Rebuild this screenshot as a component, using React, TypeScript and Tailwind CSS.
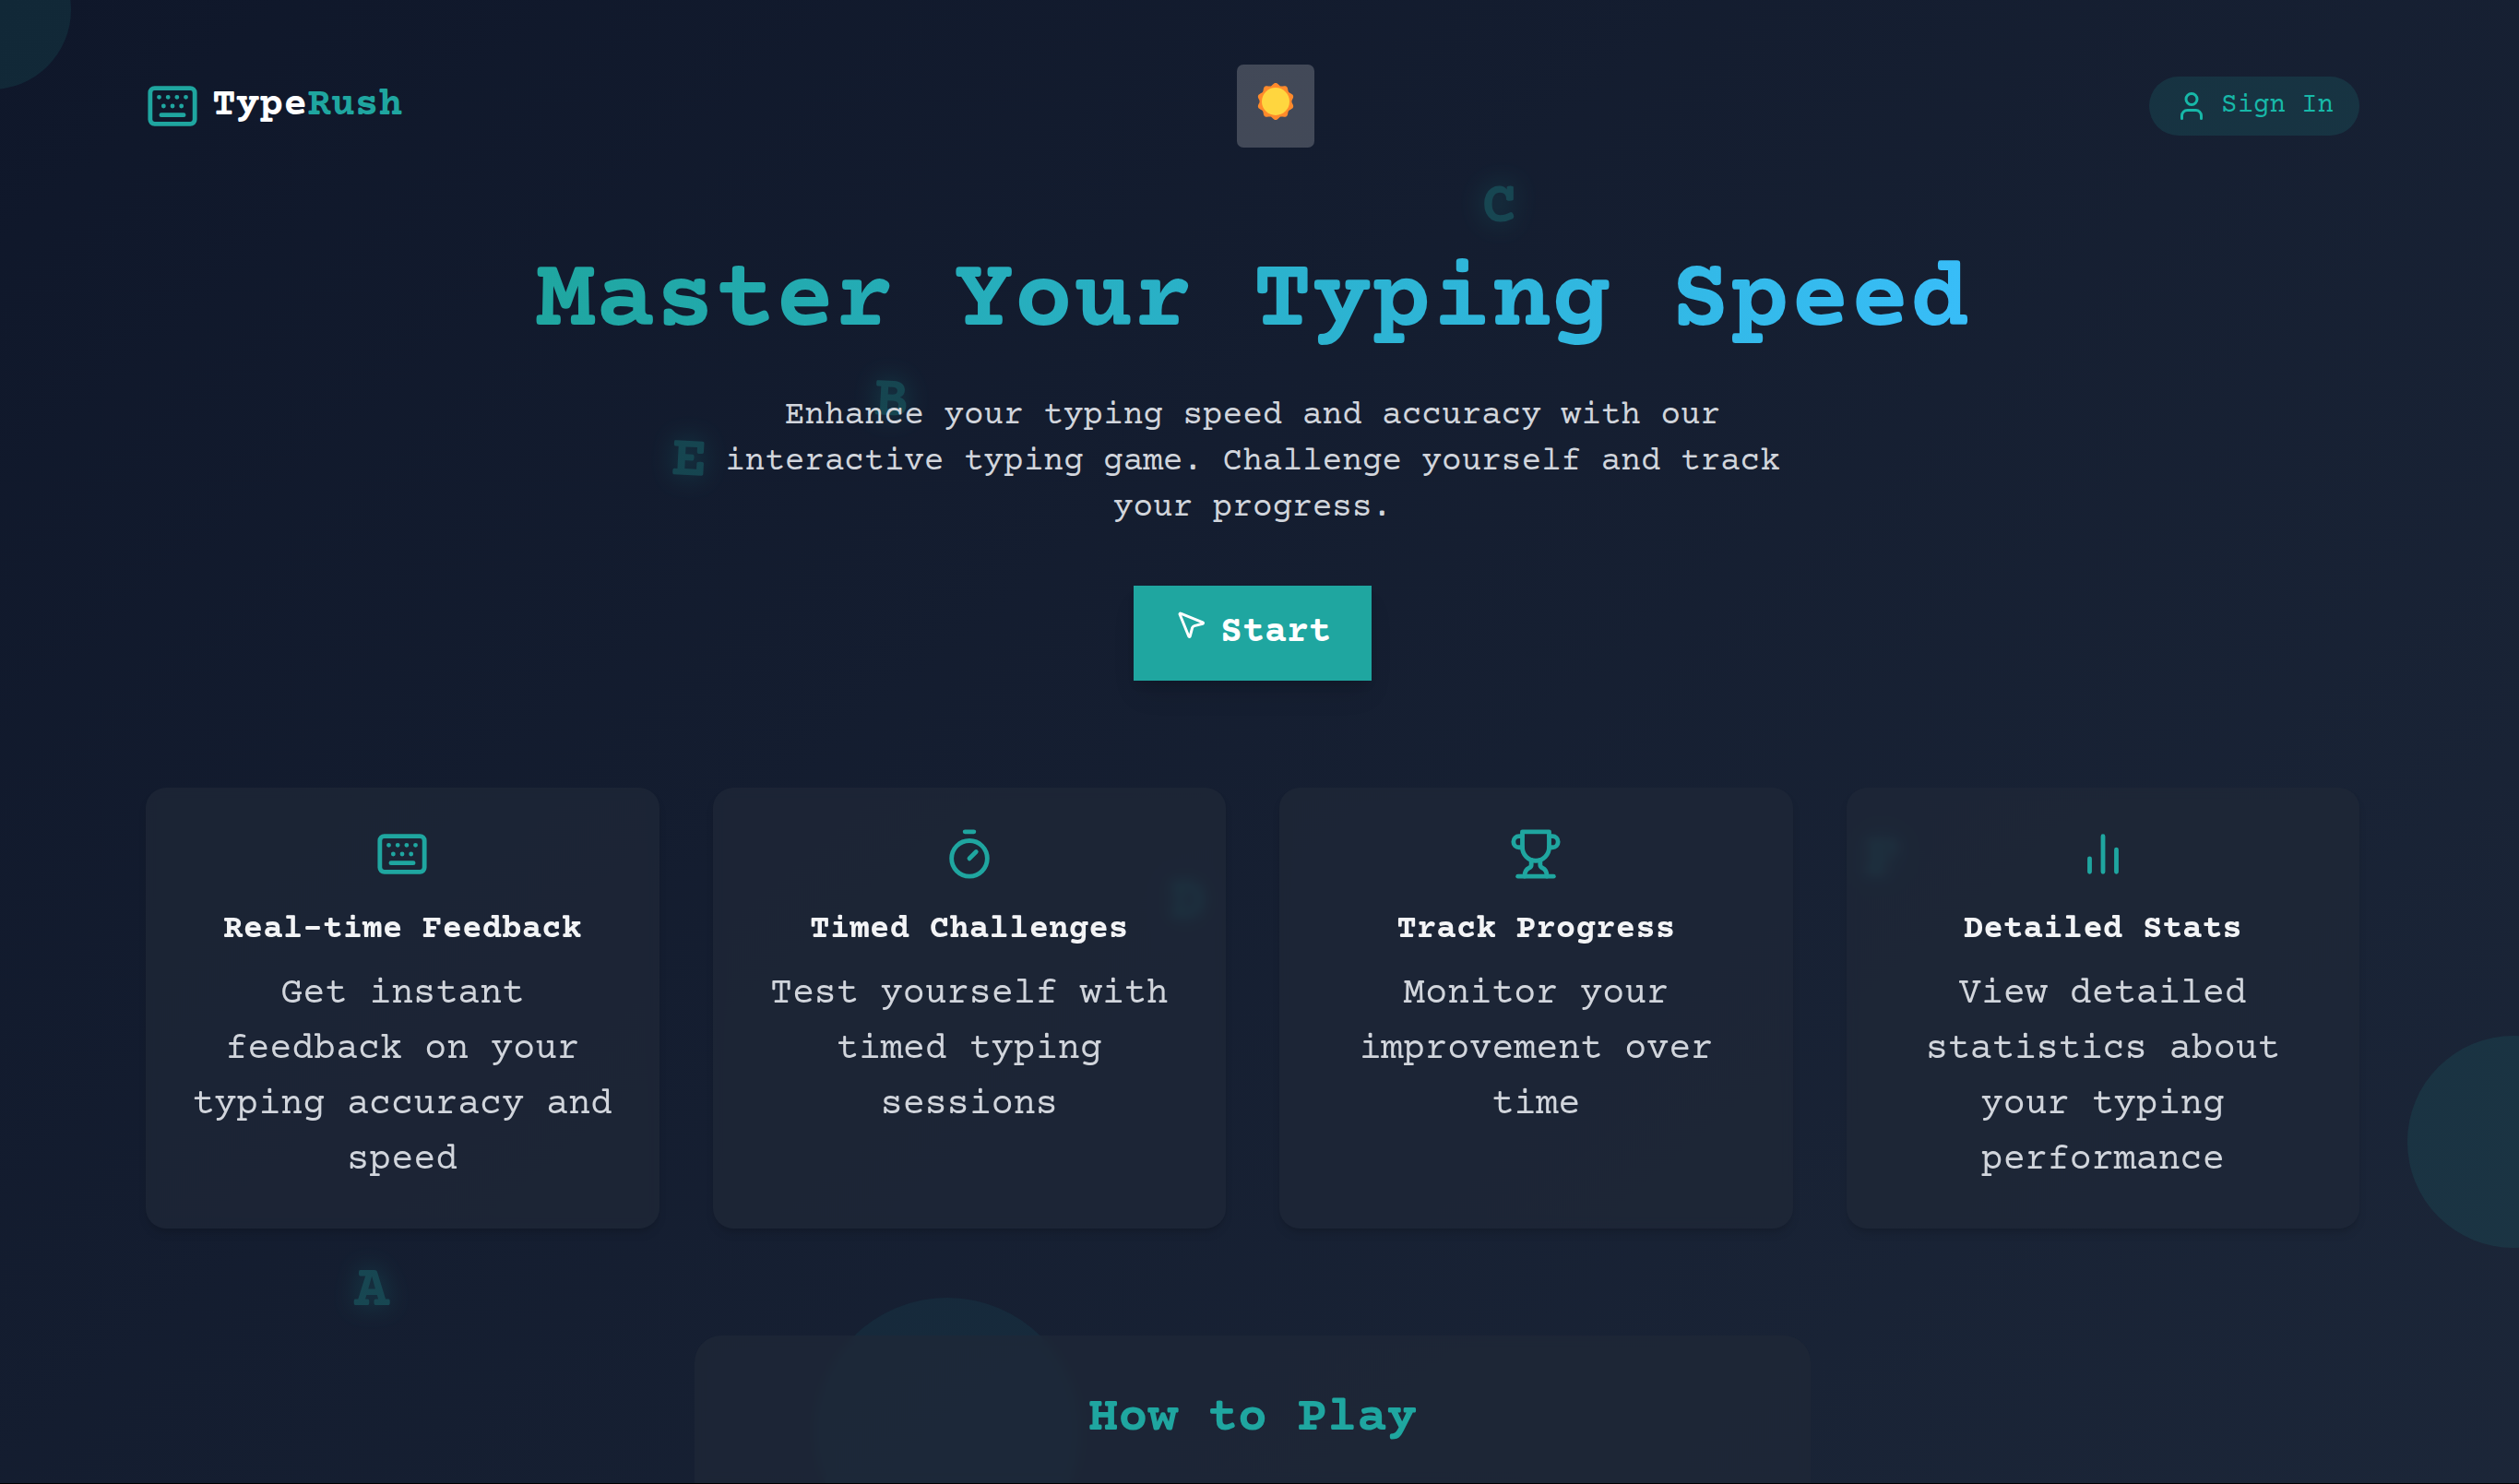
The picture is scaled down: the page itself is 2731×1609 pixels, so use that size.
import type { ComponentType, ReactNode } from "react";

type IconProps = { className?: string };

function Icon({ className, children }: { className?: string; children: ReactNode }) {
  return (
    <svg
      viewBox="0 0 24 24"
      fill="none"
      stroke="currentColor"
      strokeWidth="2"
      strokeLinecap="round"
      strokeLinejoin="round"
      aria-hidden="true"
      className={className}
    >
      {children}
    </svg>
  );
}

function KeyboardIcon({ className }: IconProps) {
  return (
    <Icon className={className}>
      <rect width="20" height="16" x="2" y="4" rx="2" />
      <path d="M6 8h.01M10 8h.01M14 8h.01M18 8h.01M8 12h.01M12 12h.01M16 12h.01M7 16h10" />
    </Icon>
  );
}

function TimerIcon({ className }: IconProps) {
  return (
    <Icon className={className}>
      <path d="M10 2h4M12 14l3-3" />
      <circle cx="12" cy="14" r="8" />
    </Icon>
  );
}

function TrophyIcon({ className }: IconProps) {
  return (
    <Icon className={className}>
      <path d="M6 9H4.5a2.5 2.5 0 0 1 0-5H6" />
      <path d="M18 9h1.5a2.5 2.5 0 0 0 0-5H18" />
      <path d="M4 22h16" />
      <path d="M10 14.66V17c0 .55-.47.98-.97 1.21C7.85 18.75 7 20.24 7 22" />
      <path d="M14 14.66V17c0 .55.47.98.97 1.21C16.15 18.75 17 20.24 17 22" />
      <path d="M18 2H6v7a6 6 0 0 0 12 0V2Z" />
    </Icon>
  );
}

function StatsIcon({ className }: IconProps) {
  return (
    <Icon className={className}>
      <path d="M18 20V10M12 20V4M6 20v-6" />
    </Icon>
  );
}

function UserIcon({ className }: IconProps) {
  return (
    <Icon className={className}>
      <path d="M19 21v-2a4 4 0 0 0-4-4H9a4 4 0 0 0-4 4v2" />
      <circle cx="12" cy="7" r="4" />
    </Icon>
  );
}

function PointerIcon({ className }: IconProps) {
  return (
    <Icon className={className}>
      <path d="M4.037 4.688a.495.495 0 0 1 .651-.651l16 6.5a.5.5 0 0 1-.063.947l-6.124 1.58a2 2 0 0 0-1.438 1.435l-1.579 6.126a.5.5 0 0 1-.947.063z" />
    </Icon>
  );
}

const sunOutline = Array.from({ length: 180 }, (_, i) => {
  const angle = (i * Math.PI) / 90;
  const radius = 18.7 + 1.3 * Math.cos(10 * angle);
  return `${(20 + radius * Math.sin(angle)).toFixed(2)},${(20 - radius * Math.cos(angle)).toFixed(2)}`;
}).join(" ");

function SunIcon({ className }: IconProps) {
  return (
    <svg viewBox="0 0 40 40" aria-hidden="true" className={className}>
      <polygon points={sunOutline} fill="#ff8a2b" />
      <circle cx="20" cy="20" r="15" fill="#ffd63f" />
    </svg>
  );
}

const letters = [
  { char: "A", place: "left-[384px] top-[1361px]" },
  { char: "B", place: "left-[947px] top-[396px] rotate-3" },
  { char: "C", place: "left-[1606px] top-[186px]" },
  { char: "D", place: "left-[1268px] top-[940px]" },
  { char: "E", place: "left-[728px] top-[461px] rotate-3" },
  { char: "F", place: "left-[2021px] top-[894px] rotate-3" },
];

const features: { icon: ComponentType<IconProps>; title: string; text: string }[] = [
  { icon: KeyboardIcon, title: "Real-time Feedback", text: "Get instant feedback on your typing accuracy and speed" },
  { icon: TimerIcon, title: "Timed Challenges", text: "Test yourself with timed typing sessions" },
  { icon: TrophyIcon, title: "Track Progress", text: "Monitor your improvement over time" },
  { icon: StatsIcon, title: "Detailed Stats", text: "View detailed statistics about your typing performance" },
];

function Backdrop() {
  return (
    <div aria-hidden="true" className="pointer-events-none absolute inset-0 overflow-hidden">
      <div className="absolute -left-24 -top-[76px] size-[173px] rounded-full bg-[#1fa6a0]/12" />
      <div className="absolute left-[2610px] top-[1123px] size-[230px] rounded-full bg-[#1fa6a0]/12" />
      <div className="absolute left-[883px] top-[1407px] size-72 rounded-full bg-[#1fa6a0]/8" />
      {letters.map(({ char, place }) => (
        <span
          key={char}
          className={`absolute text-[64px] leading-[80px] font-bold text-[#1fa6a0] opacity-30 [text-shadow:0_0_28px_#1fa6a0] ${place}`}
        >
          {char}
        </span>
      ))}
    </div>
  );
}

export default function App() {
  return (
    <div className="h-screen overflow-hidden border-b border-black font-['Courier_Prime','Liberation_Mono',monospace]">
      <div className="relative bg-linear-to-br from-[#0f172a] to-[#1e293b] pr-[15px] text-white">
        <Backdrop />
        <div className="relative mx-auto max-w-[2400px] pt-[70px]">
          <header className="flex items-center justify-between">
            <div className="flex items-center gap-[14px]">
              <KeyboardIcon className="size-[58px] text-[#1fa6a0]" />
              <span className="text-[43px] leading-[60px] font-bold">
                Type<span className="text-[#1fa6a0]">Rush</span>
              </span>
            </div>
            <button
              type="button"
              aria-label="Switch to light theme"
              className="flex h-[90px] w-[84px] justify-center rounded-[7px] bg-white/20 pt-5"
            >
              <SunIcon className="size-10" />
            </button>
            <button
              type="button"
              className="flex items-center gap-[14px] rounded-full bg-[#1fa6a0]/15 px-7 py-[14px] text-[29px] leading-9 text-[#17b8a8]"
            >
              <UserIcon className="size-9" />
              Sign In
            </button>
          </header>

          <main className="pt-[115px]">
            <section className="flex flex-col items-center text-center">
              <h1 className="bg-linear-to-r from-[#1fa6a0] to-[#38bdf8] bg-clip-text text-[108px] leading-[108px] font-bold text-transparent">
                Master Your Typing Speed
              </h1>
              <p className="mt-[43px] max-w-[1210px] text-4xl leading-[50px] text-gray-300">
                Enhance your typing speed and accuracy with our interactive typing game. Challenge yourself and track your progress.
              </p>
              <button
                type="button"
                className="mt-[59px] bg-[#1fa6a0] px-11 py-[21px] text-[40px] leading-[61px] font-bold shadow-[0_18px_27px_-5px_rgba(0,0,0,0.1),0_7px_11px_-4px_rgba(0,0,0,0.1)]"
              >
                <PointerIcon className="mr-[14px] inline-block size-9 align-baseline" />
                Start
              </button>
            </section>

            <section className="mt-[116px] grid grid-cols-4 gap-[58px]">
              {features.map(({ icon: FeatureIcon, title, text }) => (
                <article
                  key={title}
                  className="flex flex-col items-center rounded-[22px] bg-[#1f2837]/70 p-[43px] text-center shadow-[0_7px_11px_-2px_rgba(0,0,0,0.1),0_4px_7px_-2px_rgba(0,0,0,0.1)] backdrop-blur-[6px]"
                >
                  <FeatureIcon className="size-[58px] text-[#1fa6a0]" />
                  <h3 className="mt-7 text-4xl leading-[50px] font-bold text-gray-100">{title}</h3>
                  <p className="mt-4 text-[40px] leading-[60px] text-gray-300">{text}</p>
                </article>
              ))}
            </section>

            <section className="mx-auto mt-[116px] min-h-[900px] max-w-[1210px] rounded-[29px] bg-[#1f2837]/70 p-[58px] text-center backdrop-blur-[6px]">
              <h2 className="text-[54px] leading-[65px] font-bold text-[#1fa6a0]">How to Play</h2>
            </section>
          </main>
        </div>
      </div>
    </div>
  );
}
